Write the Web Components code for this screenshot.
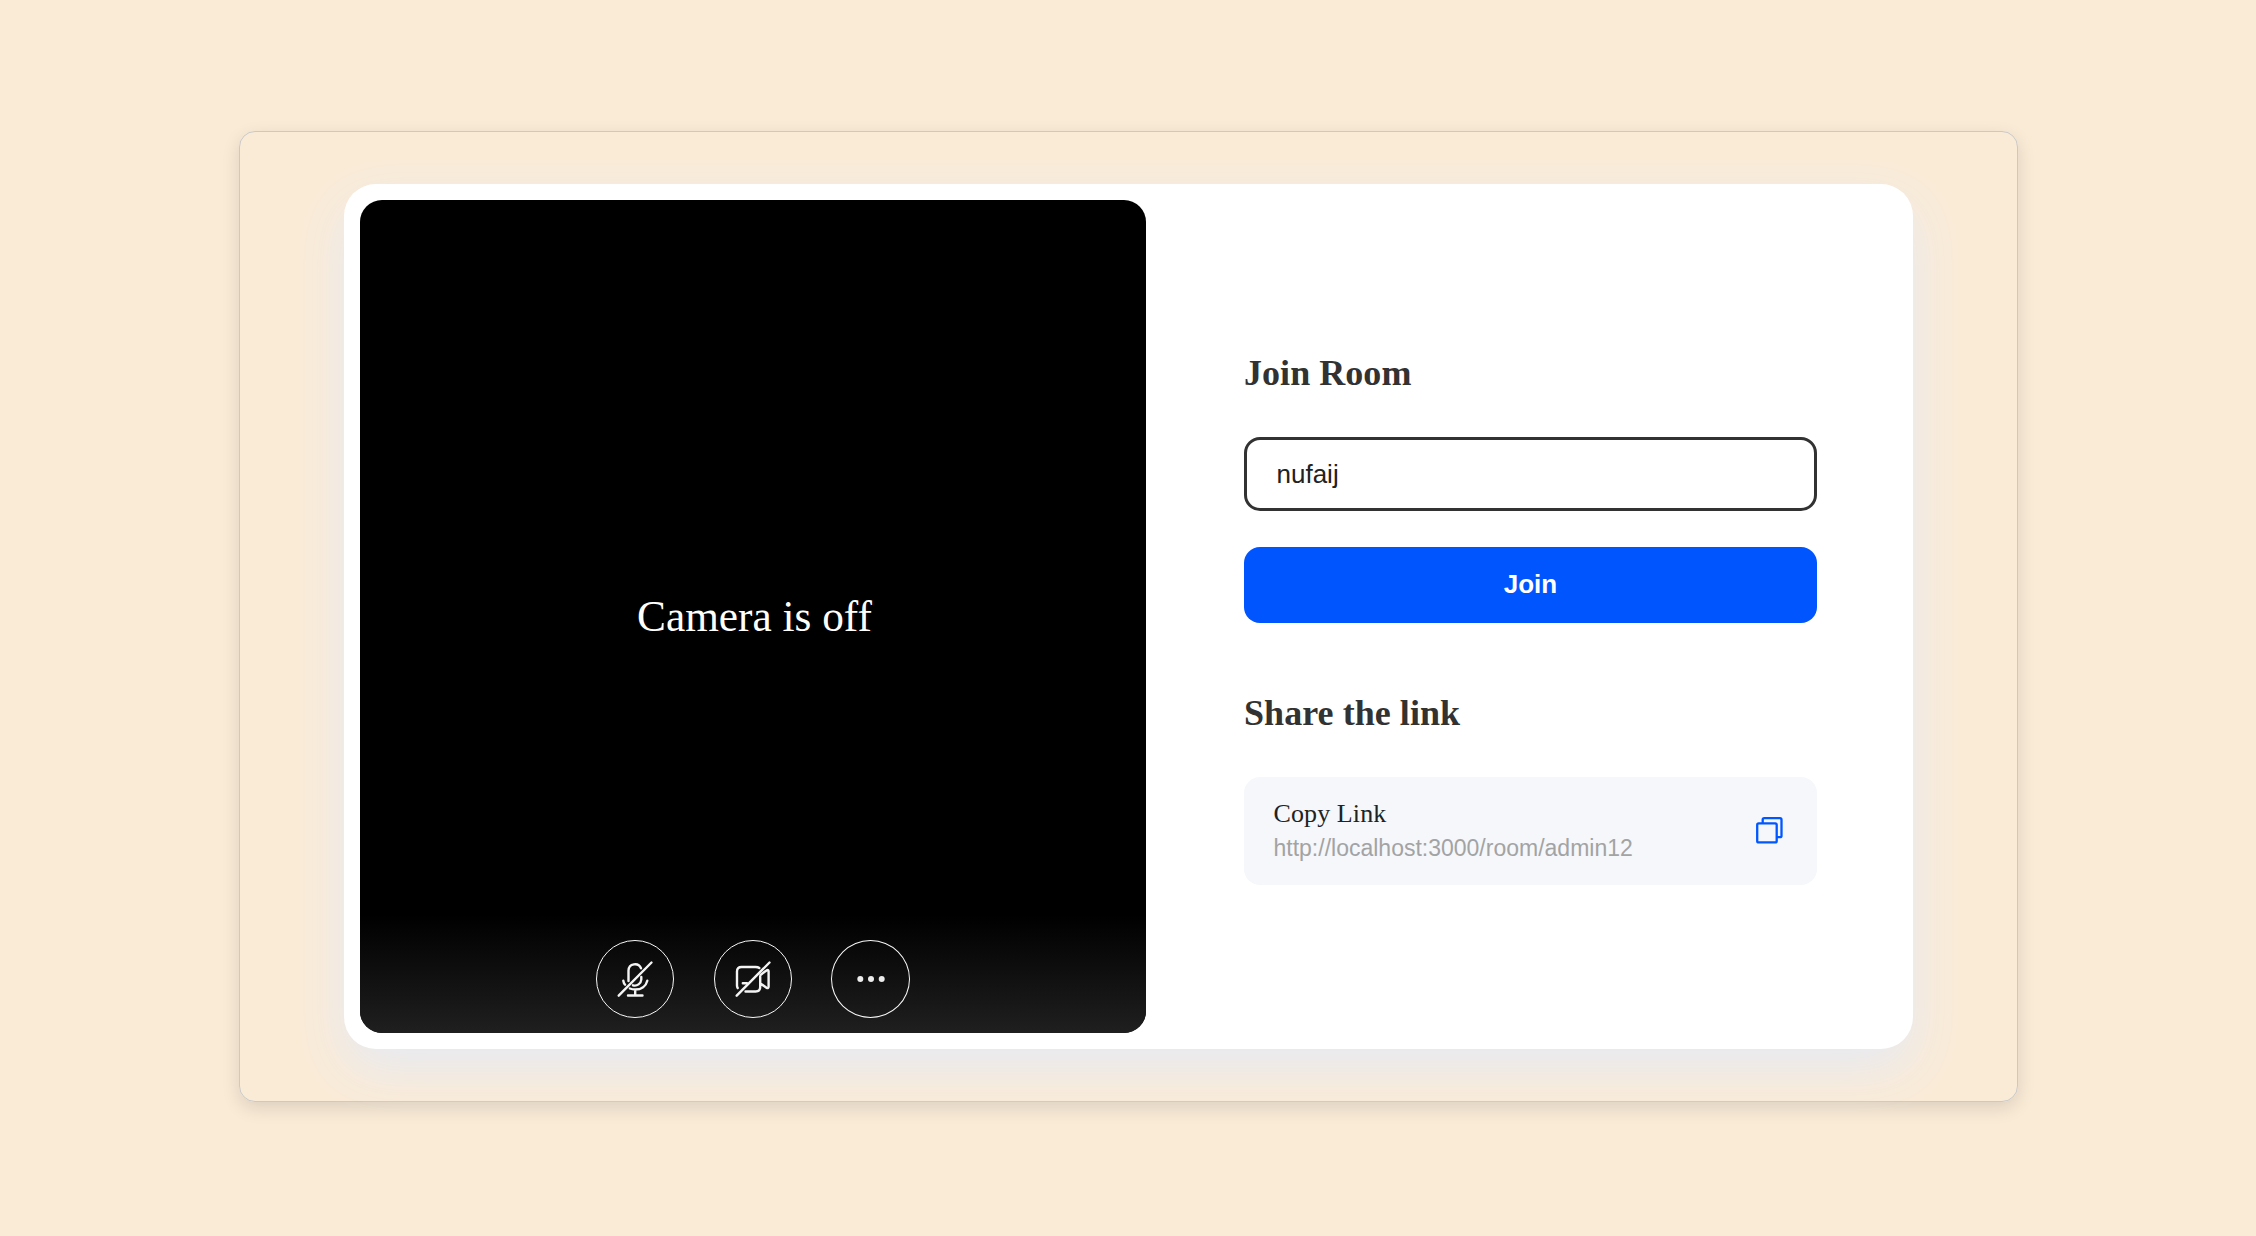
<!DOCTYPE html>
<html lang="en">
<head>
<meta charset="utf-8">
<title>Join Room</title>
<style>
html,body{height:100%}
body{margin:0;background:#faebd7;font-family:"Liberation Serif",serif;overflow:hidden}
</style>
</head>
<body>
<room-lobby>
  <camera-preview slot="preview" message="Camera is off">
    <control-button label="Microphone off"><svg width="46" height="46" viewBox="0 0 46 46" fill="none" stroke="#f4f4f4" stroke-width="2.4" stroke-linecap="round" stroke-linejoin="round"><path d="M16.500 25V14.500a6.500 6.500 0 0 1 12.500-2.200M29.300 21v2.500a6.500 6.500 0 0 1-8.300 5.800M11.300 24.700q.4 2.500 1.800 4M35.300 24.700c-1.300 5.500-6 8.800-12 8.800-2 0-4-.4-5.400-1M23.200 33.500v6M16 39.500h14.500"/><path d="M6.700 39.700 39.500 6.500"/></svg></control-button>
    <control-button label="Camera off"><svg width="46" height="46" viewBox="0 0 46 46" fill="none" stroke="#f4f4f4" stroke-width="2.4" stroke-linecap="round" stroke-linejoin="round"><path d="M7.700 32Q7 31 7 29.500V15.500Q7 11 11.500 11H25.500Q28 11 29.300 12M30.200 20.500V31Q30.200 35.500 25.700 35.500H15.500M12.800 27.300H17M35 15.500 37 14.200Q38.600 13.500 38.600 15.500V30.500Q38.600 33 36.500 31.700L30.500 27.500M30.500 19 35 15.500"/><path d="M6.700 39.700 39.500 6.500"/></svg></control-button>
    <control-button class="more" label="More"><svg width="46" height="46" viewBox="0 0 46 46" fill="#ececec"><circle cx="12.300" cy="23" r="3"/><circle cx="23" cy="23" r="3"/><circle cx="33.700" cy="23" r="3"/></svg></control-button>
  </camera-preview>
  <join-form slot="form" name="nufaij"></join-form>
  <share-link slot="form" url="http://localhost:3000/room/admin12"></share-link>
</room-lobby>
<script>
class Base extends HTMLElement{
  constructor(){super();this.attachShadow({mode:'open'}).innerHTML=this.view();}
  view(){return '';}
}
customElements.define('room-lobby',class extends Base{
  view(){return `<style>
  :host{display:flex;height:100%;box-sizing:border-box;padding:131px 238px 134px 239px;}
  .frame{flex:1;box-sizing:border-box;border:1px solid #c9c9c9;border-radius:16px;padding:52px 104px;display:flex;box-shadow:0 6px 18px rgba(0,0,0,.12)}
  .card{flex:1;box-sizing:border-box;background:#fff;border-radius:32px;padding:16px;display:flex;box-shadow:0 20px 50px #e6eaf3}
  .form{flex:1;padding:0 80px 0 98px;display:flex;flex-direction:column;}
  </style><div class="frame"><div class="card"><slot name="preview"></slot><div class="form"><slot name="form"></slot></div></div></div>`}
});
customElements.define('camera-preview',class extends Base{
  view(){return `<style>
  :host{display:flex;flex-direction:column;width:786px;background:#000;border-radius:22px;overflow:hidden;color:#fff}
  p{margin:0;padding:391px 0 0 3px;text-align:center;font-size:43.300px;line-height:50px;flex:1}
  .bar{display:flex;justify-content:center;gap:40px;padding:25px 0 15px;background:linear-gradient(#000,#1f1f1f)}
  ::slotted(.more){--size:79px;margin-left:-1px}
  </style><p>${this.getAttribute('message')}</p><div class="bar"><slot></slot></div>`}
});
customElements.define('control-button',class extends Base{
  view(){return `<style>
  :host{display:block}
  button{display:grid;place-items:center;width:var(--size,78px);height:78px;box-sizing:border-box;border:1px solid #f8f8f8;border-radius:50%;background:none;padding:0}
  </style><button aria-label="${this.getAttribute('label')}"><slot></slot></button>`}
});
const heading='h2{margin:0;font-size:36px;line-height:42px;font-weight:700;color:#323232;letter-spacing:.05px}';
customElements.define('join-form',class extends Base{
  view(){return `<style>
  :host{display:block;padding-top:152px}
  ${heading}
  input,button{display:block;width:100%;box-sizing:border-box;border-radius:16px;font:26px "Liberation Sans",sans-serif}
  input{height:74px;margin-top:43px;border:3px solid #323232;padding:0 29.500px;background:#fff;color:#222;outline:0}
  button{height:76px;margin-top:36px;border:0;padding:0 0 2px;background:#05f;color:#fff;font-weight:700}
  </style><h2>Join Room</h2><input value="${this.getAttribute('name')}" aria-label="Name"><button>Join</button>`}
});
customElements.define('share-link',class extends Base{
  view(){return `<style>
  :host{display:block;padding-top:69px}
  ${heading}
  .box{height:108px;margin-top:43px;box-sizing:border-box;border-radius:16px;background:#f5f7fb;padding:22px 30px 18px 29.500px;display:flex;justify-content:space-between}
  b{display:block;font-weight:400;font-size:26px;line-height:30px;color:#222;letter-spacing:.1px}
  span{display:block;font:23px/30px "Liberation Sans",sans-serif;margin-top:4px;color:#a3a3a3}
  svg{margin:14px 0 0}
  </style><h2>Share the link</h2><div class="box"><div><b>Copy Link</b><span>${this.getAttribute('url')}</span></div>
  <svg width="36" height="36" viewBox="0 0 36 36" fill="none" stroke="#0057ff" stroke-width="2.300" stroke-linejoin="round"><rect x="6.200" y="10.400" width="19.500" height="19" rx="1.500"/><path d="M11.700 10.400V6.700Q11.700 5.200 13.200 5.200H29Q30.500 5.200 30.500 6.700V22.700Q30.500 24.200 29 24.200H25.700"/></svg></div>`}
});
</script>
</body>
</html>
